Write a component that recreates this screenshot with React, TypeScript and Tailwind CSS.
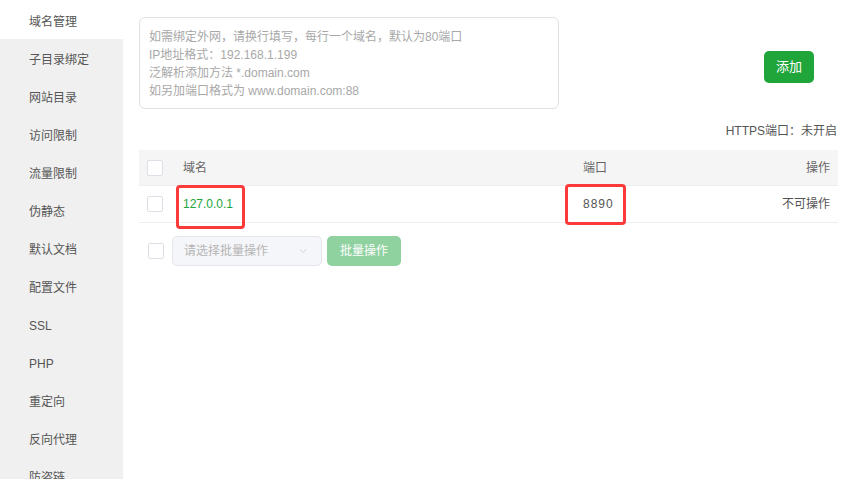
import { ChevronDown } from 'lucide-react';

const menu = [
  '域名管理',
  '子目录绑定',
  '网站目录',
  '访问限制',
  '流量限制',
  '伪静态',
  '默认文档',
  '配置文件',
  'SSL',
  'PHP',
  '重定向',
  '反向代理',
  '防盗链',
];

const Checkbox = () => (
  <span className="block w-4 h-4 border border-[#dcdfe6] rounded-[2px] bg-white" />
);

const App = () => {
  return (
    <div
      className="flex w-[852px] h-[479px] overflow-hidden bg-white text-[12px] text-[#555]"
      style={{ fontFamily: '"Liberation Sans", "Noto Sans CJK SC", sans-serif' }}
    >
      <aside className="w-[123px] shrink-0 bg-[#f0f0f0]">
        {menu.map((item, i) => (
          <div
            key={item}
            className={`h-[38px] flex items-center pt-[4px] pl-[29px] text-[12px] text-[#555] ${i === 0 ? 'bg-white h-[39px]' : ''}`}
          >
            {item}
          </div>
        ))}
      </aside>

      <main className="flex-1 pl-4 pr-[14px] pt-[17px]">
        <div className="flex items-center">
          <div className="w-[420px] h-[92px] border border-[#e1e1e1] rounded-[6px] px-[9px] pt-[10px] text-[12px] leading-[18px] text-[#a8a8a8]">
            <div>如需绑定外网，请换行填写，每行一个域名，默认为80端口</div>
            <div>IP地址格式：192.168.1.199</div>
            <div>泛解析添加方法 *.domain.com</div>
            <div>如另加端口格式为 www.domain.com:88</div>
          </div>
          <div className="flex-1 flex justify-end pr-[24px] pt-[8px]">
            <button className="w-[50px] h-[32px] rounded-[5px] bg-[#20a53a] text-white text-[13px]">添加</button>
          </div>
        </div>

        <div className="mt-[13px] text-right text-[12px] text-[#555] pr-[1px]">HTTPS端口：未开启</div>

        <div className="mt-[10px] w-[699px]">
          <div className="h-[36px] flex items-center bg-[#f5f5f5] border-b border-[#eceef4] text-[#666]">
            <div className="w-[44px] pl-[8px]"><Checkbox /></div>
            <div className="w-[400px]">域名</div>
            <div className="flex-1">端口</div>
            <div className="pr-[8px]">操作</div>
          </div>
          <div className="h-[37px] flex items-center border-b border-[#eceef4]">
            <div className="w-[44px] pl-[8px]"><Checkbox /></div>
            <div className="w-[400px] relative">
              <span className="text-[#20a53a]">127.0.0.1</span>
              <span className="absolute left-[-7px] top-[-10px] w-[69px] h-[44px] border-[3px] border-[#fd3a3a] rounded-[4px]" />
            </div>
            <div className="flex-1 relative">
              <span className="text-[#555] tracking-[1px]">8890</span>
              <span className="absolute left-[-18px] top-[-11px] w-[61px] h-[41px] border-[3px] border-[#fd3a3a] rounded-[4px]" />
            </div>
            <div className="pr-[8px] text-[#555]">不可操作</div>
          </div>

          <div className="mt-[13px] flex items-center">
            <div className="w-[33px] pl-[9px]"><Checkbox /></div>
            <div className="w-[150px] h-[30px] flex items-center justify-between pl-[11px] pr-[12px] rounded-[5px] border border-[#e4e6ec] bg-[#f5f6f9] text-[#b5b5b5]">
              <span>请选择批量操作</span>
              <ChevronDown className="w-3 h-3 text-[#c0c4cc]" strokeWidth={1.5} />
            </div>
            <button className="ml-[5px] w-[74px] h-[30px] rounded-[5px] bg-[#90d1a0] text-white text-[12px]">批量操作</button>
          </div>
        </div>
      </main>
    </div>
  );
};

export default App;
